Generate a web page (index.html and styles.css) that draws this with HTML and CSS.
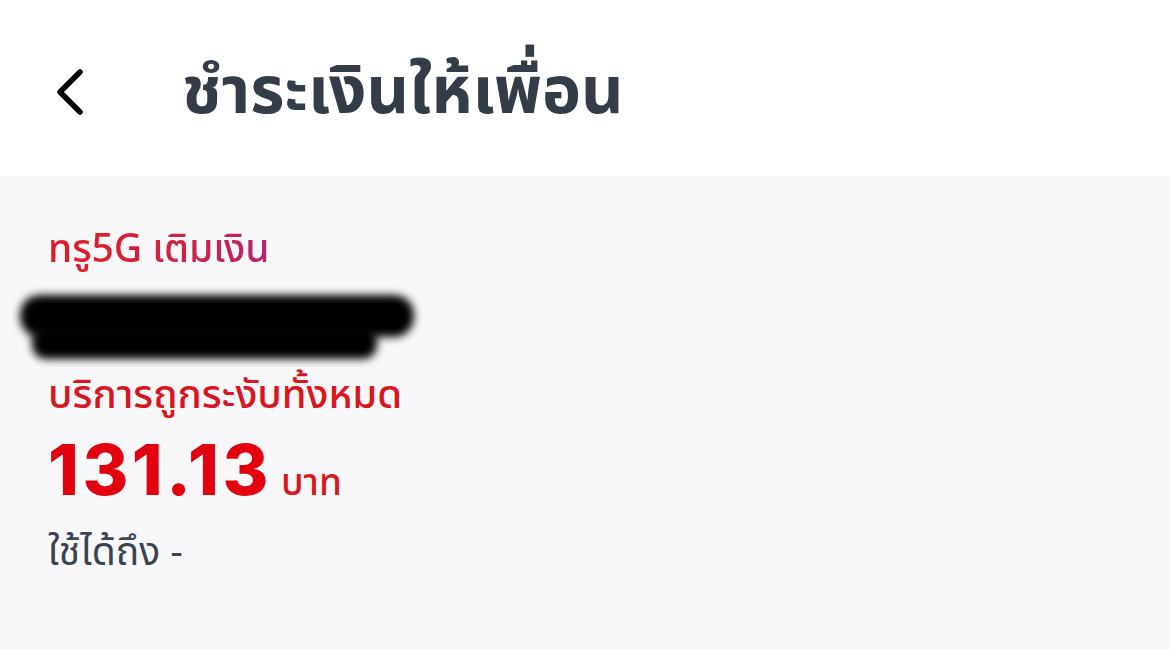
FILE: index.html
```html
<!DOCTYPE html>
<html lang="th">
<head>
<meta charset="utf-8">
<link rel="stylesheet" href="styles.css">
</head>
<body>
<header class="topbar">
  <button class="back" aria-label="back">
    <svg width="34" height="46" viewBox="0 0 34 46"><path d="M28 3 L8 23 L28 43" fill="none" stroke="#000" stroke-width="5.5" stroke-linecap="round" stroke-linejoin="round"/></svg>
  </button>
  <h1 class="title">ชำระเงินให้เพื่อน</h1>
</header>
<main class="content">
  <div class="brand">ทรู5G เติมเงิน</div>
  <div class="redact"><div class="blob b1"></div><div class="blob b2"></div></div>
  <div class="status">บริการถูกระงับทั้งหมด</div>
  <div class="amount"><span class="num">131.13</span><span class="unit">บาท</span></div>
  <div class="expiry">ใช้ได้ถึง -</div>
</main>
</body>
</html>
```
FILE: styles.css
```css
html, body { margin: 0; padding: 0; }
body {
  width: 1170px; height: 649px; overflow: hidden;
  background: #f8f8fa;
  font-family: "Noto Sans Thai", "Noto Sans", "Open Sans", sans-serif;
}
.topbar {
  height: 176px; background: #fff;
  display: flex; align-items: center;
  padding-left: 52px; box-sizing: border-box;
}
.back { border: 0; background: none; padding: 0; width: 130px; display: flex; align-items: center; height: 46px; margin-top: 7px; }
.title { margin: 0; font-size: 66px; font-weight: 700; color: #333c47; line-height: 90px; margin-top: 10px; }
.content { padding: 50px 0 0 48px; }
.brand {
  font-size: 39px; font-weight: 500; line-height: 50px;
  background: linear-gradient(90deg, #e21b23 0%, #d2213f 55%, #b52573 100%);
  -webkit-background-clip: text; background-clip: text; color: transparent;
  display: block; width: max-content;
}
.redact { height: 95px; margin-left: -28px; width: 400px; padding-top: 19px; box-sizing: border-box; }
.blob { background: #000; filter: blur(4px); }
.b1 { height: 42px; width: 394px; border-radius: 20px; margin-top: 0; }
.b2 { height: 32px; width: 345px; margin-left: 12px; border-radius: 14px; margin-top: -10px; }
.status { font-size: 40px; font-weight: 500; color: #d9161f; line-height: 50px; }
.amount { display: flex; align-items: baseline; gap: 9px; color: #e3000f; line-height: 80px; margin-top: 9px; }
.num { font-family: "Inter", "Liberation Sans", sans-serif; font-size: 70px; font-weight: 800; letter-spacing: 3.5px; }
.unit { font-size: 37px; font-weight: 500; color: #d51a1e; }
.expiry { font-size: 39px; color: #3a4450; line-height: 56px; margin-top: 2px; }
```
